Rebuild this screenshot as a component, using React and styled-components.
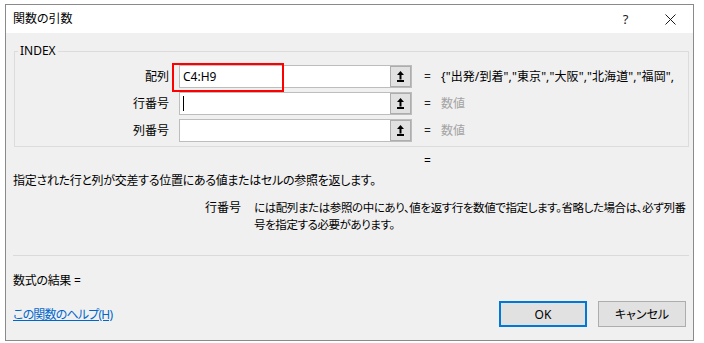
import React from 'react';
import styled, { createGlobalStyle } from 'styled-components';

const Global = createGlobalStyle`
  html, body { margin: 0; padding: 0; background: #ffffff; }
  body {
    font-family: "Noto Sans", "Noto Sans CJK JP", sans-serif;
    font-size: 12px;
    color: #000000;
    font-feature-settings: "palt";
  }
  * { box-sizing: border-box; }
`;

const Dialog = styled.div`
  margin: 4px 0 0 5px;
  width: 689px;
  height: 337px;
  border: 1px solid #8a8a8a;
  background: #f0f0f0;
  display: flex;
  flex-direction: column;
`;

const TitleBar = styled.div`
  height: 28px;
  flex: none;
  background: #ffffff;
  display: flex;
  align-items: center;
  padding-left: 7px;
`;

const Title = styled.div`
  flex: 1;
  font-size: 12px;
  line-height: 14px;
`;

const TitleButton = styled.div`
  width: 45px;
  height: 28px;
  display: flex;
  align-items: center;
  justify-content: center;
  font-size: 13px;
  color: #1a1a1a;
`;

const Body = styled.div`
  flex: 1;
  display: flex;
  flex-direction: column;
  padding: 0 4px 0 7px;
`;

const Group = styled.fieldset`
  margin: 11px 0 0 1px;
  padding: 7px 0 4px 0;
  border: 1px solid #dcdcdc;
  min-width: 0;
`;

const Legend = styled.legend`
  margin-left: 3px;
  padding: 0 2px;
  font-size: 12px;
  line-height: 14px;
`;

const ArgGrid = styled.div`
  display: grid;
  grid-template-columns: 164px 233px 29px 1fr;
  grid-auto-rows: 23px;
  row-gap: 4px;
  align-items: center;
`;

const ArgLabel = styled.div`
  text-align: right;
  padding-right: 10px;
  line-height: 16px;
`;

const EditCell = styled.div`
  position: relative;
  height: 23px;
  display: flex;
  align-items: center;
  background: #ffffff;
  border: 1px solid #bdbdbd;
`;

const EditText = styled.div`
  flex: 1;
  padding-left: 3px;
  line-height: 16px;
  display: flex;
  align-items: center;
`;

const Caret = styled.span`
  display: inline-block;
  width: 1px;
  height: 15px;
  background: #000000;
`;

const RefButton = styled.div`
  width: 21px;
  height: 21px;
  background: #e1e1e1;
  border: 1px solid #adadad;
  display: flex;
  align-items: center;
  justify-content: center;
`;

const Highlight = styled.div`
  position: absolute;
  left: -8px;
  top: -3px;
  width: 112px;
  height: 29px;
  border: 2px solid #ff0000;
  pointer-events: none;
`;

const Eq = styled.div`
  padding-left: 12px;
  line-height: 16px;
  color: #222222;
`;

const Value = styled.div`
  line-height: 16px;
  white-space: nowrap;
  letter-spacing: 0.1px;
  color: ${(p) => (p.$muted ? '#a3a3a3' : '#000000')};
`;

const ResultEq = styled.div`
  margin-top: 7px;
  padding-left: 411px;
  line-height: 14px;
`;

const Description = styled.div`
  margin-top: 6px;
  line-height: 14px;
  letter-spacing: -0.3px;
`;

const ArgHelp = styled.div`
  margin-top: 11px;
  display: grid;
  grid-template-columns: 192px 49px 1fr;
  line-height: 17px;
`;

const ArgHelpName = styled.div`
  grid-column: 2;
`;

const ArgHelpText = styled.div`
  grid-column: 3;
  font-size: 11.5px;
  letter-spacing: -0.4px;
`;

const Separator = styled.div`
  margin-top: 22px;
  height: 1px;
  background: #dadada;
`;

const Result = styled.div`
  margin-top: 18px;
  line-height: 14px;
  letter-spacing: -0.3px;
`;

const Footer = styled.div`
  margin-top: 13px;
  display: flex;
  align-items: center;
  padding-right: 3px;
`;

const LinkWrap = styled.div`
  flex: 1;
`;

const HelpLink = styled.a`
  color: #0066cc;
  text-decoration: underline;
  line-height: 14px;
  letter-spacing: -0.8px;
  cursor: pointer;
`;

const Button = styled.button`
  width: 88px;
  height: 26px;
  margin-left: ${(p) => (p.$first ? '0' : '11px')};
  background: #e1e1e1;
  border: 1px solid ${(p) => (p.$default ? '#0078d7' : '#adadad')};
  box-shadow: ${(p) => (p.$default ? 'inset 0 0 0 1px #0078d7' : 'none')};
  font-family: inherit;
  font-size: 12px;
  font-feature-settings: "palt";
  color: #000000;
  padding: 0;
`;

const RefIcon = () => (
  <svg width="11" height="13" viewBox="0 0 11 13">
    <path d="M5.5 1 L9 5 L2 5 Z" fill="#000" />
    <rect x="4.5" y="4.5" width="2" height="5" fill="#000" />
    <rect x="2" y="10" width="7" height="2" fill="#000" />
  </svg>
);

const CloseIcon = () => (
  <svg width="11" height="11" viewBox="0 0 11 11">
    <path d="M0.5 0.5 L10.5 10.5 M10.5 0.5 L0.5 10.5" stroke="#1a1a1a" strokeWidth="1" />
  </svg>
);

const args = [
  { name: '配列', value: '{"出発/到着","東京","大阪","北海道","福岡",', text: 'C4:H9', highlight: true },
  { name: '行番号', value: '数値', muted: true, caret: true },
  { name: '列番号', value: '数値', muted: true },
];

export default function App() {
  return (
    <>
      <Global />
      <Dialog>
        <TitleBar>
          <Title>関数の引数</Title>
          <TitleButton>?</TitleButton>
          <TitleButton>
            <CloseIcon />
          </TitleButton>
        </TitleBar>
        <Body>
          <Group>
            <Legend>INDEX</Legend>
            <ArgGrid>
              {args.map((a) => (
                <React.Fragment key={a.name}>
                  <ArgLabel>{a.name}</ArgLabel>
                  <EditCell>
                    <EditText>
                      {a.text}
                      {a.caret && <Caret />}
                    </EditText>
                    <RefButton>
                      <RefIcon />
                    </RefButton>
                    {a.highlight && <Highlight />}
                  </EditCell>
                  <Eq>=</Eq>
                  <Value $muted={a.muted}>{a.value}</Value>
                </React.Fragment>
              ))}
            </ArgGrid>
          </Group>
          <ResultEq>=</ResultEq>
          <Description>指定された行と列が交差する位置にある値またはセルの参照を返します。</Description>
          <ArgHelp>
            <ArgHelpName>行番号</ArgHelpName>
            <ArgHelpText>
              には配列または参照の中にあり、値を返す行を数値で指定します。省略した場合は、必ず列番号を指定する必要があります。
            </ArgHelpText>
          </ArgHelp>
          <Separator />
          <Result>数式の結果 =</Result>
          <Footer>
            <LinkWrap>
              <HelpLink>この関数のヘルプ(H)</HelpLink>
            </LinkWrap>
            <Button $first $default>OK</Button>
            <Button>キャンセル</Button>
          </Footer>
        </Body>
      </Dialog>
    </>
  );
}
